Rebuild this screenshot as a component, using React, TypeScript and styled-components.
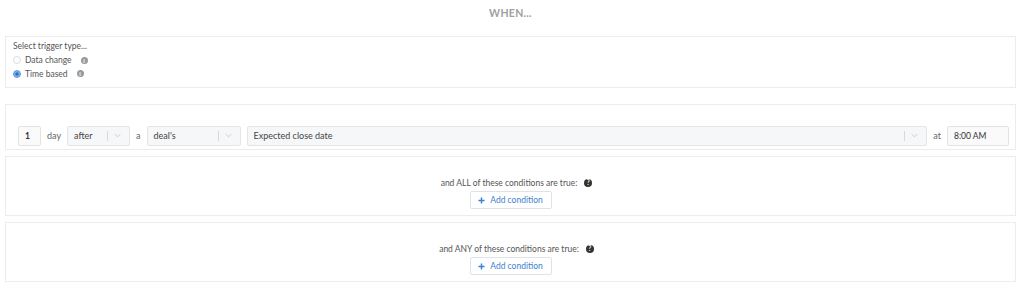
import React from 'react';
import styled, {createGlobalStyle} from "styled-components";

const GlobalStyle = createGlobalStyle`
  body {
    margin: 0;
    background: #fff;
    font-family: Lato, "Open Sans", sans-serif;
    color: #555;
  }
`

type SelectPropsType = {
    value: string
    width: number
}

const Select = (props: SelectPropsType) => {
    return (
        <SelectBox width={props.width}>
            <SelectValue>{props.value}</SelectValue>
            <SelectSep/>
            <Chevron viewBox="0 0 10 6">
                <path d="M1 1l4 4 4-4" fill="none" stroke="#b8bcc2" strokeWidth="1"/>
            </Chevron>
        </SelectBox>
    );
};

const Info = () => <InfoIcon>i</InfoIcon>

type ConditionsPropsType = {
    mode: string
}

const Conditions = (props: ConditionsPropsType) => {
    return (
        <ConditionPanel>
            <ConditionTitle>
                and {props.mode} of these conditions are true:
                <Help>?</Help>
            </ConditionTitle>
            <AddButton>
                <PlusIcon viewBox="0 0 8 8">
                    <path d="M4 0.5v7M0.5 4h7" stroke="#3d82cc" strokeWidth="1.7"/>
                </PlusIcon>
                Add condition
            </AddButton>
        </ConditionPanel>
    );
};

export default function App() {
    return (
        <Page>
            <GlobalStyle/>
            <Heading>WHEN...</Heading>
            <TriggerPanel>
                <Label>Select trigger type...</Label>
                <RadioRow>
                    <Radio checked={false}/>
                    <span>Data change</span>
                    <Info/>
                </RadioRow>
                <RadioRow>
                    <Radio checked={true}/>
                    <span>Time based</span>
                    <Info/>
                </RadioRow>
            </TriggerPanel>
            <RulePanel>
                <NumberInput width={23}>1</NumberInput>
                <Word>day</Word>
                <Select value="after" width={63}/>
                <Word>a</Word>
                <Select value="deal's" width={94}/>
                <Grow>
                    <Select value="Expected close date" width={0}/>
                </Grow>
                <Word>at</Word>
                <NumberInput width={62}>8:00 AM</NumberInput>
            </RulePanel>
            <Conditions mode="ALL"/>
            <Conditions mode="ANY"/>
        </Page>
    );
}

const Page = styled.div`
  padding: 0 8px 0 5px;
  font-size: 8.5px;
`
const Heading = styled.div`
  height: 36px;
  line-height: 27px;
  text-align: center;
  font-size: 10.5px;
  font-weight: 700;
  color: #a0a0a0;
  letter-spacing: 0.3px;
`
const Panel = styled.div`
  border: 1px solid #ececec;
  background: #fff;
`
const TriggerPanel = styled(Panel)`
  height: 52px;
  box-sizing: border-box;
  padding: 3px 7px 0;
`
const Label = styled.div`
  line-height: 13.5px;
  color: #555;
`
const RadioRow = styled.div`
  display: flex;
  align-items: center;
  gap: 4px;
  height: 13.5px;
`
const Radio = styled.span<{ checked: boolean }>`
  width: 8px;
  height: 8px;
  border-radius: 50%;
  box-sizing: border-box;
  margin: 0 0 0 0;
  border: 1px solid ${p => p.checked ? '#5b9be0' : '#dcdcdc'};
  background: ${p => p.checked ? 'radial-gradient(circle, #2f6fb8 0 1.4px, #7db0e8 1.8px)' : '#fff'};
`
const InfoIcon = styled.span`
  display: inline-flex;
  align-items: center;
  justify-content: center;
  width: 7px;
  height: 7px;
  border-radius: 50%;
  background: #9a9a9a;
  color: #fff;
  font-size: 6px;
  font-weight: 700;
  margin-left: 5px;
`
const RulePanel = styled(Panel)`
  margin-top: 16px;
  height: 46px;
  box-sizing: border-box;
  padding: 17px 6px 0 12px;
  display: flex;
  align-items: center;
`
const NumberInput = styled.div<{ width: number }>`
  width: ${p => p.width}px;
  height: 20px;
  box-sizing: border-box;
  border: 1px solid #e3e3e3;
  border-radius: 2px;
  background: #fafafa;
  display: flex;
  align-items: center;
  padding-left: 6px;
  color: #333;
  font-size: 8.5px;
  &:first-child {
    font-weight: 700;
  }
`
const Word = styled.span`
  display: flex;
  align-items: center;
  height: 20px;
  padding: 0 6px;
  color: #666;
  font-size: 9px;
`
const SelectBox = styled.div<{ width: number }>`
  width: ${p => p.width ? `${p.width}px` : '100%'};
  height: 20px;
  box-sizing: border-box;
  border: 1px solid #e3e5e8;
  border-radius: 2px;
  background: #f6f7f9;
  display: flex;
  align-items: center;
  padding-left: 6px;
  color: #444;
  font-size: 9px;
`
const SelectValue = styled.span`
  flex: 1;
`
const SelectSep = styled.span`
  width: 1px;
  height: 10px;
  background: #d6d9dd;
`
const Chevron = styled.svg`
  width: 7px;
  height: 5px;
  margin: 0 8px 0 6px;
`
const Grow = styled.div`
  flex: 1;
  display: flex;
  margin-left: 6px;
`
const ConditionPanel = styled(Panel)`
  margin-top: 6px;
  height: 60px;
  box-sizing: border-box;
  padding-top: 19px;
  display: flex;
  flex-direction: column;
  align-items: center;
`
const ConditionTitle = styled.div`
  display: flex;
  align-items: center;
  height: 13px;
  color: #555;
  padding-left: 12px;
`
const Help = styled.span`
  display: inline-flex;
  align-items: center;
  justify-content: center;
  width: 8px;
  height: 8px;
  border-radius: 50%;
  background: #333;
  color: #fff;
  font-size: 6.5px;
  font-weight: 700;
  margin-left: 7px;
`
const AddButton = styled.div`
  margin-top: 2px;
  width: 82px;
  height: 18px;
  box-sizing: border-box;
  border: 1px solid #dfe3e8;
  border-radius: 2px;
  background: #fff;
  display: flex;
  align-items: center;
  justify-content: center;
  gap: 5px;
  color: #3d82cc;
  font-size: 8.5px;
`
const PlusIcon = styled.svg`
  width: 7px;
  height: 7px;
`
